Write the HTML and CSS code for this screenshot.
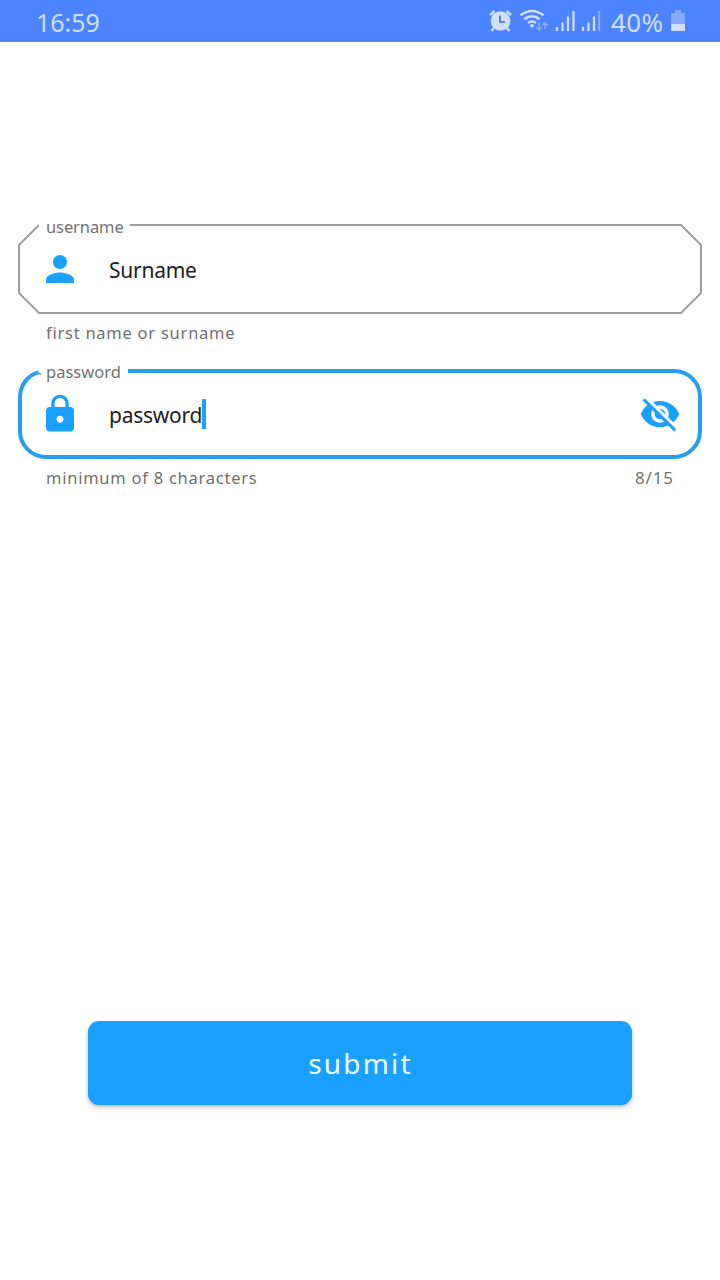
FILE: index.html
```html
<!DOCTYPE html>
<html lang="en">
<head>
<meta charset="utf-8">
<title>Sign in</title>
<link rel="stylesheet" href="styles.css">
</head>
<body>
<header class="status">
  <span class="clock">16:59</span>
  <svg class="status-icons" width="120" height="42" viewBox="484 0 120 42">
    <g fill="#cfdffe" stroke="#cfdffe">
      <circle cx="500.500" cy="21" r="9.800" stroke="none"/>
      <path d="M494 28l-2.500 3M507 28l2.500 3M490 15l4.500-4M511 15l-4.500-4" stroke-width="2.500" fill="none"/>
      <path d="M500 15.500v6.500h5" stroke="#4c84ff" stroke-width="2" fill="none"/>
    </g>
    <g fill="none" stroke="#cfdffe" stroke-width="2.400">
      <path d="M520.500 15.300q11.500-8.600 23 0M524.300 19.300q7.700-6 15.400 0M528 23q4-3.200 8 0"/>
    </g>
    <circle cx="532" cy="25.800" r="1.800" fill="#cfdffe"/>
    <path d="M539 22.500v7M536 27l3 3 3-3M545 29v-6M542 25.500l3-3 3 3" fill="none" stroke="#84abff" stroke-width="1.700"/>
    <path d="M557 27v4M562.500 22.500v8.500M568 16.500v14.500M573.500 11v20M583 27v4M588.500 22.500v8.500M594 16.500v14.500" stroke="#cfdffe" stroke-width="2.300"/>
    <path d="M599 11v20" stroke="#84abff" stroke-width="2.200"/>
  </svg>
  <span class="percent">40%</span>
  <svg class="battery" width="14" height="22" viewBox="0 0 14 22"><path d="M4 0h6v3h4v11H0V3h4z" fill="#84abff"/><path d="M0 14h14v6q0 1-1 1H1q-1 0-1-1z" fill="#cfdffe"/></svg>
</header>
<main class="form">
  <section class="field">
    <div class="box">
      <svg class="outline" width="684" height="90" viewBox="0 0 684 90"><path d="M112 1H663L683 21V69L663 89H21L1 69V21L21 1" fill="none" stroke="#9e9e9e" stroke-width="2"/><path d="M21 0h8v5h-8z" fill="#fff"/></svg>
      <div class="label-clip"><span class="label">username</span></div>
      <svg class="icon" width="42" height="42" viewBox="0 0 24 24"><path fill="#1aa1ff" d="M12 12c2.210 0 4-1.790 4-4s-1.790-4-4-4-4 1.790-4 4 1.790 4 4 4zm0 2c-2.670 0-8 1.340-8 4v2h16v-2c0-2.660-5.330-4-8-4z"/></svg>
      <span class="value value-user">Surname</span>
    </div>
    <div class="help"><span>first name or surname</span></div>
  </section>
  <section class="field">
    <div class="box">
      <svg class="outline" width="684" height="90" viewBox="0 0 684 90"><path d="M110 2H656A26 26 0 0 1 682 28V62A26 26 0 0 1 656 88H28A26 26 0 0 1 2 62V28A26 26 0 0 1 20.500 3.100" fill="none" stroke="#279ff0" stroke-width="4"/><path d="M20.500 3.700L25 5l-4.500.7z" fill="#279ff0"/></svg>
      <div class="label-clip label-clip-pass"><span class="label label-pass">password</span></div>
      <svg class="icon" width="42" height="42" viewBox="0 0 24 24"><path fill="#1aa1ff" fill-rule="evenodd" d="M18 8h-1V6c0-2.760-2.240-5-5-5S7 3.240 7 6v2H6c-1.100 0-2 .9-2 2v10c0 1.100.9 2 2 2h12c1.100 0 2-.9 2-2V10c0-1.100-.9-2-2-2zm-6 9c-1.100 0-2-.9-2-2s.9-2 2-2 2 .9 2 2-.9 2-2 2zm3.100-9H8.900V6c0-1.710 1.390-3.100 3.100-3.100s3.100 1.390 3.100 3.100v2z"/></svg>
      <span class="value value-pass">password</span><span class="caret"></span>
      <svg class="eye" width="42" height="42" viewBox="0 0 24 24"><path fill="#1aa1ff" d="M12 4.500C7 4.500 2.730 7.610 1 12c1.730 4.390 6 7.500 11 7.500s9.270-3.110 11-7.500c-1.730-4.390-6-7.500-11-7.500zM12 17c-2.760 0-5-2.240-5-5s2.240-5 5-5 5 2.240 5 5-2.240 5-5 5zm0-8c-1.660 0-3 1.340-3 3s1.340 3 3 3 3-1.340 3-3-1.340-3-3-3z"/><path d="M3.300 2.400L21.300 20.400" stroke="#fff" stroke-width="2.700"/><path d="M2.650 3.650L20.700 21.300" stroke="#1aa1ff" stroke-width="1.800"/></svg>
    </div>
    <div class="help"><span>minimum of 8 characters</span><span class="count">8/15</span></div>
  </section>
  <button class="submit" type="button">submit</button>
</main>
</body>
</html>
```
FILE: styles.css
```css
* { box-sizing: border-box; }
body { margin: 0; min-height: 1280px; background: #fff; font-family: "Noto Sans", sans-serif; display: flex; flex-direction: column; }
svg { display: block; flex: none; }
.status { height: 42px; background: #4c84ff; color: #cfdffe; display: flex; align-items: center; padding: 0 35px 0 36px; font-size: 25px; line-height: 42px; }
.clock { padding-top: 2px; }
.status-icons { margin-left: auto; }
.percent { width: 60px; padding: 2px 0 0 7px; font-size: 26px; letter-spacing: 0.4px; }
.battery { margin-left: 7px; }
.form { flex: 1; padding: 182px 18px 0; display: flex; flex-direction: column; }
.field { height: 145px; }
.box { position: relative; height: 90px; padding: 0 20px 0 21px; display: flex; align-items: center; }
.outline { position: absolute; inset: 0; }
.label-clip { position: absolute; left: 28px; top: 0; height: 24px; overflow: hidden; }
.label-clip-pass { top: -8px; height: 28px; }
.label { display: block; font-size: 16.500px; line-height: 24px; margin-top: -9px; color: #707070; letter-spacing: -0.1px; }
.label-pass { margin-top: -1px; letter-spacing: 0; }
.icon { position: relative; }
.value { margin-left: 28px; font-size: 21px; line-height: 30px; color: #202020; padding-top: 2px; letter-spacing: -0.25px; }
.caret { width: 4px; height: 30px; background: #1aa1ff; }
.eye { margin-left: auto; transform: translateX(-1px); }
.help { display: flex; justify-content: space-between; padding: 7px 28px 0; font-size: 16.500px; line-height: 24px; color: #707070; letter-spacing: 0.75px; }
.count { font-size: 17px; letter-spacing: 0.9px; }
.submit { width: 544px; height: 84px; margin: 507px auto 0; border: 0; border-radius: 11px; background: #1aa1ff; color: #f2ffff; font: 28px/84px "Noto Sans", sans-serif; letter-spacing: 2.200px; padding: 0 0 0 1px; box-shadow: 0 2px 4px rgba(0,0,0,.28); }
```
